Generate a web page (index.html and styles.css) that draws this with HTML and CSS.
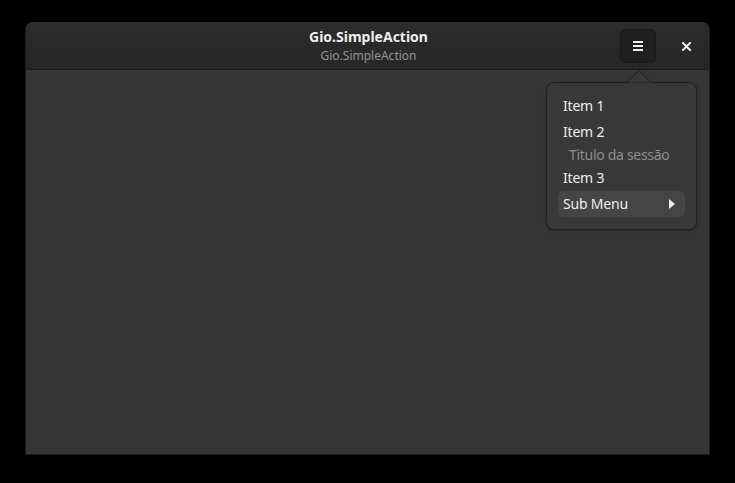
FILE: index.html
```html
<!DOCTYPE html>
<html>
<head>
<meta charset="utf-8">
<link rel="stylesheet" href="styles.css">
</head>
<body>
<div class="window">
  <header class="headerbar">
    <div class="spacer"></div>
    <div class="titles">
      <div class="title">Gio.SimpleAction</div>
      <div class="subtitle">Gio.SimpleAction</div>
    </div>
    <div class="controls">
      <button class="menu-btn" aria-label="Menu">
        <svg width="10" height="10" viewBox="0 0 10 10"><rect x="0" y="0" width="10" height="2" fill="#eeeeec"/><rect x="0" y="4" width="10" height="2" fill="#eeeeec"/><rect x="0" y="8" width="10" height="2" fill="#eeeeec"/></svg>
      </button>
      <button class="close-btn" aria-label="Close">
        <svg width="9" height="9" viewBox="0 0 9 9"><path d="M1 1 L8 8 M8 1 L1 8" stroke="#eeeeec" stroke-width="2" stroke-linecap="square"/></svg>
      </button>
    </div>
  </header>
  <main class="content"></main>
  <div class="popover">
    <svg class="arrow" width="26" height="13" viewBox="0 0 26 13"><path d="M0 12.5 L12 0.5 L24 12.5" fill="#383838" stroke="#1f1f1f" stroke-width="1"/></svg>
    <div class="item">Item 1</div>
    <div class="item">Item 2</div>
    <div class="section">Titulo da sessão</div>
    <div class="item">Item 3</div>
    <div class="item active"><span>Sub Menu</span><svg width="6" height="10" viewBox="0 0 6 10"><path d="M0 0 L6 5 L0 10 Z" fill="#eeeeec"/></svg></div>
  </div>
</div>
</body>
</html>
```
FILE: styles.css
```css
html, body {
  margin: 0;
  padding: 0;
  background: #000;
  width: 735px;
  height: 483px;
  overflow: hidden;
  font-family: "Noto Sans", "Open Sans", sans-serif;
}
.window {
  position: relative;
  margin: 22px 0 0 25px;
  width: 685px;
  height: 433px;
  box-sizing: border-box;
  border: 1px solid #1e1e1e;
  border-top-color: #303030;
  border-radius: 8px 8px 0 0;
  background: #363636;
  display: flex;
  flex-direction: column;
}
.headerbar {
  height: 47px;
  box-sizing: border-box;
  border-bottom: 1px solid #1b1b1b;
  background: linear-gradient(#2c2c2c, #262626);
  border-radius: 7px 7px 0 0;
  display: flex;
  align-items: center;
  padding: 0 2px 0 6px;
}
.spacer { width: 90px; }
.titles {
  flex: 1;
  display: flex;
  flex-direction: column;
  align-items: center;
  margin-top: -1px;
  padding-right: 2px;
}
.title {
  color: #eeeeec;
  font-weight: bold;
  font-size: 14px;
  line-height: 18px;
}
.subtitle {
  color: #939393;
  font-size: 12px;
  line-height: 16px;
  margin-top: 2px;
}
.controls {
  display: flex;
  align-items: center;
  width: 90px;
  justify-content: flex-end;
}
.menu-btn {
  width: 36px;
  height: 34px;
  box-sizing: border-box;
  border: 1px solid #1a1a1a;
  border-radius: 5px;
  background: #1f1f1f;
  display: flex;
  align-items: center;
  justify-content: center;
  padding: 0;
  margin-right: 17px;
}
.close-btn {
  width: 26px;
  height: 26px;
  border: none;
  background: transparent;
  display: flex;
  align-items: center;
  justify-content: center;
  padding: 0;
  margin-right: 8px;
}
.content {
  flex: 1;
  background: #363636;
}
.popover {
  position: absolute;
  left: 520px;
  top: 59px;
  width: 151px;
  height: 148px;
  box-sizing: border-box;
  background: #383838;
  border: 1px solid #1f1f1f;
  border-radius: 8px;
  padding: 10px 11px 0 11px;
  box-shadow: 0 1px 3px rgba(0,0,0,0.3);
}
.arrow {
  position: absolute;
  left: 80px;
  top: -13px;
}
.item {
  color: #eeeeec;
  font-size: 14px;
  letter-spacing: -0.2px;
  height: 26px;
  line-height: 26px;
  padding: 0 5px;
  border-radius: 5px;
  display: flex;
  justify-content: space-between;
  align-items: center;
  white-space: nowrap;
}
.section {
  color: #8e8e8e;
  font-size: 14px;
  letter-spacing: -0.3px;
  height: 20px;
  line-height: 20px;
  padding: 0 11px;
  white-space: nowrap;
}
.item.active {
  background: #454545;
  padding-right: 10px;
}
```
